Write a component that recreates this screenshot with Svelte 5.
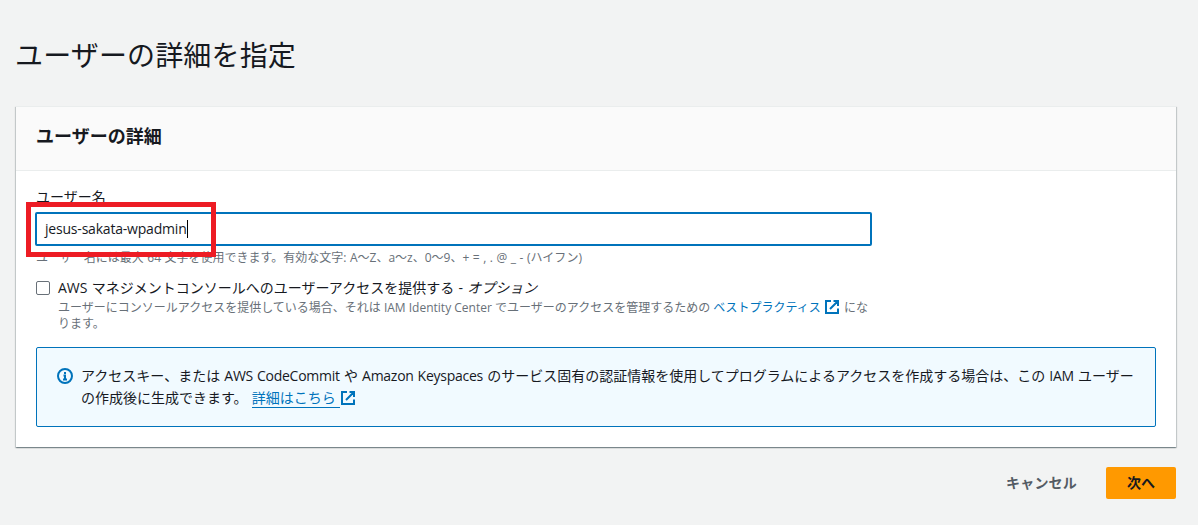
<script lang="ts">
  let userName = "jesus-sakata-wpadmin";
  let consoleAccess = false;
</script>

{#snippet external(size: number)}
  <svg class="external" width={size} height={size} viewBox="0 0 16 16" aria-hidden="true">
    <path d="M7 2H2v12h12V9.5M9.5 2H14v5M6 10l7.5-7.5" />
  </svg>
{/snippet}

<main>
  <h1>ユーザーの詳細を指定</h1>

  <section class="container">
    <header>
      <h2>ユーザーの詳細</h2>
    </header>

    <div class="content">
      <div class="field">
        <label for="user-name">ユーザー名</label>
        <div id="user-name" class="input" role="textbox" tabindex="-1">
          <span class="value">{userName}</span><span class="caret"></span>
        </div>
        <div class="highlight"></div>
        <p class="hint">
          ユーザー名には最大 64 文字を使用できます。有効な文字: <span class="chars">A～Z、a～z、0～9、+ = , . @ _ - (</span>ハイフン)
        </p>
      </div>

      <div class="access">
        <span class="checkbox" role="checkbox" aria-checked={consoleAccess} tabindex="-1"></span>
        <div>
          <p class="access-label">
            AWS マネジメントコンソールへのユーザーアクセスを提供する - <em>オプション</em>
          </p>
          <p class="description">
            ユーザーにコンソールアクセスを提供している場合、それは IAM Identity Center でユーザーのアクセスを管理するための <span class="link">ベストプラクティス {@render external(16)}</span> にな<br />ります。
          </p>
        </div>
      </div>

      <div class="alert">
        <svg class="info" width="16" height="16" viewBox="0 0 16 16" aria-hidden="true">
          <circle cx="8" cy="8" r="7" />
          <path d="M8 11V7.5H6.5M6 11.5h4M8 6V4" />
        </svg>
        <p>
          アクセスキー、または <span class="service">AWS CodeCommit</span> や <span class="service">Amazon Keyspaces</span> のサービス固有の認証情報を使用してプログラムによるアクセスを作成する場合は、この <span class="service">IAM</span> ユーザー<br />の作成後に生成できます。 <span class="link"><u>詳細はこちら&nbsp;</u>{@render external(16)}</span>
        </p>
      </div>
    </div>
  </section>

  <div class="actions">
    <button class="cancel">キャンセル</button>
    <button class="next">次へ</button>
  </div>
</main>

<style>
  :global(body) {
    background: #f2f3f3;
  }

  main {
    box-sizing: border-box;
    color: #16191f;
    font-family: "Open Sans", "Noto Sans CJK JP", sans-serif;
    font-size: 14px;
    height: 525px;
    line-height: 22px;
    overflow: hidden;
    padding: 37px 22px 0 15px;
    white-space: nowrap;
  }

  h1,
  h2,
  p {
    font-weight: 400;
    margin: 0;
  }

  h1 {
    font-size: 28px;
    letter-spacing: 0.15px;
    line-height: 36px;
    margin-bottom: 33px;
  }

  .container {
    background: #fff;
    border-top: 1px solid #eaeded;
    box-shadow:
      0 1px 1px 0 rgba(0, 28, 36, 0.3),
      1px 1px 1px 0 rgba(0, 28, 36, 0.15),
      -1px 1px 1px 0 rgba(0, 28, 36, 0.15);
    box-sizing: border-box;
    height: 341px;
    margin-left: 1px;
  }

  header {
    background: #fafafa;
    border-bottom: 1px solid #eaeded;
    box-sizing: border-box;
    height: 64px;
    padding: 18px 20px;
  }

  h2 {
    font-size: 18px;
    font-weight: 700;
    line-height: 22px;
  }

  .content {
    padding: 15px 20px 20px;
  }

  .field {
    margin-left: -1px;
    position: relative;
    width: 837px;
  }

  label {
    display: block;
    margin-bottom: 4px;
    padding-left: 1px;
  }

  .input {
    align-items: center;
    background: #fff;
    border: 2px solid #0073bb;
    border-radius: 2px;
    box-sizing: border-box;
    display: flex;
    height: 34px;
    padding: 0 8px;
  }

  .value {
    letter-spacing: -0.2px;
  }

  .caret {
    background: #000;
    height: 18px;
    width: 1px;
  }

  .highlight {
    border: 5px solid #ed1c24;
    box-sizing: border-box;
    height: 55px;
    left: -9px;
    position: absolute;
    top: 16px;
    width: 190px;
  }

  .hint,
  .description {
    color: #687078;
    font-size: 12px;
    line-height: 16px;
  }

  .hint {
    margin-top: 4px;
    padding-left: 1px;
    word-spacing: 0.4px;
  }

  .access {
    display: flex;
    gap: 8px;
    margin-top: 11px;
  }

  .access-label {
    word-spacing: 0.6px;
  }

  .checkbox {
    background: #fff;
    border: 1px solid #687078;
    border-radius: 2px;
    box-sizing: border-box;
    height: 14px;
    margin-top: 4px;
    width: 14px;
  }

  .link {
    color: #0073bb;
  }

  .description .link {
    margin-right: 1px;
  }

  u {
    text-decoration: none;
    border-bottom: 1px solid #0073bb;
  }

  svg {
    fill: none;
    flex-shrink: 0;
    stroke: #0073bb;
    stroke-width: 2;
  }

  .external {
    vertical-align: -3px;
  }

  .alert {
    background: #f1faff;
    border: 1px solid #0073bb;
    border-radius: 2px;
    box-sizing: border-box;
    display: flex;
    gap: 8px;
    height: 80px;
    margin-top: 15px;
    padding: 17px 20px;
    word-spacing: 0.5px;
  }

  .service {
    letter-spacing: -0.25px;
  }

  .info {
    margin-top: 3px;
  }

  .actions {
    display: flex;
    gap: 8px;
    justify-content: flex-end;
    margin-top: 20px;
  }

  button {
    border: 0;
    border-radius: 2px;
    color: #16191f;
    font: inherit;
    font-weight: 700;
    height: 32px;
    padding: 0 21px;
  }

  .cancel {
    background: none;
    color: #545b64;
    letter-spacing: 0.2px;
  }

  .next {
    background: #f90;
  }
</style>
